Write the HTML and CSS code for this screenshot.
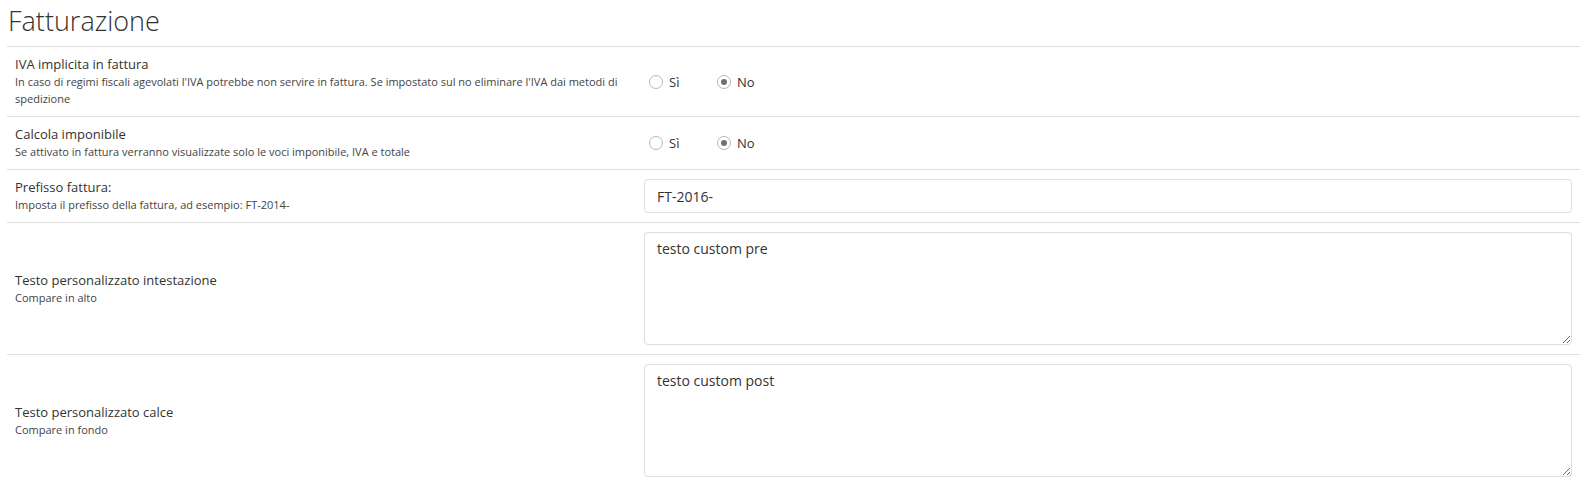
FILE: index.html
```html
<!DOCTYPE html>
<html lang="it">
<head>
    <meta charset="UTF-8">
    <meta name="viewport" content="width=device-width, initial-scale=1.0">
    <title>Fatturazione</title>
    <link rel="stylesheet" href="styles.css">
</head>
<body>
    <div class="panel">
        <h2 class="title">Fatturazione</h2>

        <div class="setting">
            <div class="info">
                <div class="name">IVA implicita in fattura</div>
                <div class="help">In caso di regimi fiscali agevolati l'IVA potrebbe non servire in fattura. Se impostato sul no eliminare l'IVA dai metodi di spedizione</div>
            </div>
            <div class="field">
                <label class="option"><input type="radio" name="iva" value="1"> Sì</label>
                <label class="option"><input type="radio" name="iva" value="0" checked> No</label>
            </div>
        </div>

        <div class="setting">
            <div class="info">
                <div class="name">Calcola imponibile</div>
                <div class="help">Se attivato in fattura verranno visualizzate solo le voci imponibile, IVA e totale</div>
            </div>
            <div class="field">
                <label class="option"><input type="radio" name="imponibile" value="1"> Sì</label>
                <label class="option"><input type="radio" name="imponibile" value="0" checked> No</label>
            </div>
        </div>

        <div class="setting">
            <div class="info">
                <div class="name">Prefisso fattura:</div>
                <div class="help">Imposta il prefisso della fattura, ad esempio: FT-2014-</div>
            </div>
            <div class="field">
                <input class="form-control" type="text" value="FT-2016-">
            </div>
        </div>

        <div class="setting">
            <div class="info">
                <div class="name">Testo personalizzato intestazione</div>
                <div class="help">Compare in alto</div>
            </div>
            <div class="field">
                <textarea class="form-control">testo custom pre</textarea>
            </div>
        </div>

        <div class="setting">
            <div class="info">
                <div class="name">Testo personalizzato calce</div>
                <div class="help">Compare in fondo</div>
            </div>
            <div class="field">
                <textarea class="form-control">testo custom post</textarea>
            </div>
        </div>
    </div>
</body>
</html>
```

FILE: styles.css
```css
body {
    margin: 0;
    background-color: #fff;
    font-family: "Open Sans", "Liberation Sans", sans-serif;
    color: #333;
}

.panel {
    padding: 0 7px;
}

.title {
    margin: 0 0 8px;
    padding: 4px 0 0 1px;
    font-size: 27px;
    font-weight: 300;
    line-height: 34px;
    color: #333;
}

.setting {
    display: grid;
    grid-template-columns: 622px 1fr;
    align-items: center;
    border-top: 1px solid #e0e0e0;
    padding: 9px 0;
}

.info {
    padding: 0 8px;
}

.name {
    font-size: 13px;
    line-height: 17px;
    color: #333;
}

.help {
    font-size: 11px;
    line-height: 17px;
    color: #444;
}

.field {
    display: flex;
    align-items: center;
    padding: 0 8px 0 15px;
}

.option {
    display: flex;
    align-items: center;
    width: 68px;
    font-size: 13px;
    color: #333;
}

.option input {
    appearance: none;
    -webkit-appearance: none;
    width: 14px;
    height: 14px;
    margin: 0 6px 0 5px;
    border: 1px solid #b8b8b8;
    border-radius: 50%;
    background-color: #fff;
    display: grid;
    place-items: center;
}

.option input:checked::before {
    content: '';
    width: 6px;
    height: 6px;
    border-radius: 50%;
    background-color: #707070;
}

.form-control {
    box-sizing: border-box;
    width: 100%;
    padding: 6px 12px;
    border: 1px solid #ddd;
    border-radius: 4px;
    font-family: inherit;
    font-size: 14px;
    line-height: 20px;
    color: #333;
    background-color: #fff;
    margin: 0;
}

input.form-control {
    height: 34px;
}

textarea.form-control {
    display: block;
    height: 113px;
    resize: vertical;
}
```
